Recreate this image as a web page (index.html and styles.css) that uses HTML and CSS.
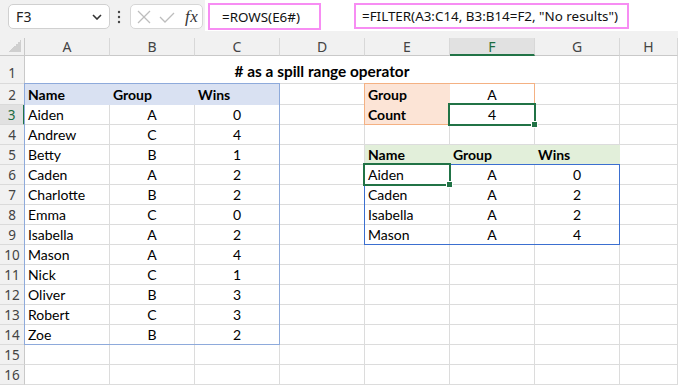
FILE: index.html
```html
<!DOCTYPE html>
<html>
<head>
<meta charset="utf-8">
<link rel="stylesheet" href="styles.css">
</head>
<body>
<div class="app">
  <div class="top">
    <div class="namebox">
      <span class="nb-text">F3</span>
      <svg class="chev" width="10" height="6" viewBox="0 0 10 6"><polyline points="1,1 5,5 9,1" fill="none" stroke="#333" stroke-width="1.6"/></svg>
    </div>
    <div class="dots">
      <svg width="4" height="14" viewBox="0 0 4 14"><circle cx="2" cy="2" r="1.2" fill="#444"/><circle cx="2" cy="7" r="1.2" fill="#444"/><circle cx="2" cy="12" r="1.2" fill="#444"/></svg>
    </div>
    <div class="fxbox">
      <svg class="ico-x" width="14" height="14" viewBox="0 0 14 14"><line x1="1" y1="1" x2="13" y2="13" stroke="#bdbdbd" stroke-width="1.3"/><line x1="13" y1="1" x2="1" y2="13" stroke="#bdbdbd" stroke-width="1.3"/></svg>
      <svg class="ico-ok" width="16" height="11" viewBox="0 0 16 11"><polyline points="1,5 6,10 15,1" fill="none" stroke="#bdbdbd" stroke-width="1.3"/></svg>
      <span class="fx">fx</span>
    </div>
    <div class="fbar">
      <div class="fbox fbox1">=ROWS(E6#)</div>
      <div class="fbox fbox2">=FILTER(A3:C14, B3:B14=F2, "No results")</div>
    </div>
  </div>

  <div class="sheet">
    <div class="cells">
      <div class="ch corner"></div>
      <div class="ch">A</div><div class="ch">B</div><div class="ch">C</div><div class="ch">D</div>
      <div class="ch">E</div><div class="ch ch-sel">F</div><div class="ch">G</div><div class="ch">H</div>

      <div class="rh r1">1</div>
      <div class="c title">#&nbsp;as a spill range operator</div>
      <div class="c"></div>

      <div class="rh">2</div>
      <div class="c b fb">Name</div><div class="c b fb">Group</div><div class="c b fb">Wins</div><div class="c"></div>
      <div class="c b fo">Group</div><div class="c m">A</div><div class="c"></div><div class="c"></div>

      <div class="rh rh-sel">3</div>
      <div class="c">Aiden</div><div class="c m">A</div><div class="c m">0</div><div class="c"></div>
      <div class="c b fo">Count</div><div class="c m">4</div><div class="c"></div><div class="c"></div>

      <div class="rh">4</div>
      <div class="c">Andrew</div><div class="c m">C</div><div class="c m">4</div><div class="c"></div>
      <div class="c"></div><div class="c"></div><div class="c"></div><div class="c"></div>

      <div class="rh">5</div>
      <div class="c">Betty</div><div class="c m">B</div><div class="c m">1</div><div class="c"></div>
      <div class="c b fg">Name</div><div class="c b fg">Group</div><div class="c b fg">Wins</div><div class="c"></div>

      <div class="rh">6</div>
      <div class="c">Caden</div><div class="c m">A</div><div class="c m">2</div><div class="c"></div>
      <div class="c">Aiden</div><div class="c m">A</div><div class="c m">0</div><div class="c"></div>

      <div class="rh">7</div>
      <div class="c">Charlotte</div><div class="c m">B</div><div class="c m">2</div><div class="c"></div>
      <div class="c">Caden</div><div class="c m">A</div><div class="c m">2</div><div class="c"></div>

      <div class="rh">8</div>
      <div class="c">Emma</div><div class="c m">C</div><div class="c m">0</div><div class="c"></div>
      <div class="c">Isabella</div><div class="c m">A</div><div class="c m">2</div><div class="c"></div>

      <div class="rh">9</div>
      <div class="c">Isabella</div><div class="c m">A</div><div class="c m">2</div><div class="c"></div>
      <div class="c">Mason</div><div class="c m">A</div><div class="c m">4</div><div class="c"></div>

      <div class="rh">10</div>
      <div class="c">Mason</div><div class="c m">A</div><div class="c m">4</div><div class="c"></div>
      <div class="c"></div><div class="c"></div><div class="c"></div><div class="c"></div>

      <div class="rh">11</div>
      <div class="c">Nick</div><div class="c m">C</div><div class="c m">1</div><div class="c"></div>
      <div class="c"></div><div class="c"></div><div class="c"></div><div class="c"></div>

      <div class="rh">12</div>
      <div class="c">Oliver</div><div class="c m">B</div><div class="c m">3</div><div class="c"></div>
      <div class="c"></div><div class="c"></div><div class="c"></div><div class="c"></div>

      <div class="rh">13</div>
      <div class="c">Robert</div><div class="c m">C</div><div class="c m">3</div><div class="c"></div>
      <div class="c"></div><div class="c"></div><div class="c"></div><div class="c"></div>

      <div class="rh">14</div>
      <div class="c">Zoe</div><div class="c m">B</div><div class="c m">2</div><div class="c"></div>
      <div class="c"></div><div class="c"></div><div class="c"></div><div class="c"></div>

      <div class="rh">15</div>
      <div class="c"></div><div class="c"></div><div class="c"></div><div class="c"></div>
      <div class="c"></div><div class="c"></div><div class="c"></div><div class="c"></div>

      <div class="rh">16</div>
      <div class="c"></div><div class="c"></div><div class="c"></div><div class="c"></div>
      <div class="c"></div><div class="c"></div><div class="c"></div><div class="c"></div>
    </div>

    <div class="marks">
      <div class="mk mk-blue"></div>
      <div class="mk mk-orange"></div>
      <div class="mk mk-spill"></div>
      <div class="mk sel sel-f3"></div>
      <div class="mk sel sel-e6"></div>
    </div>
  </div>
</div>
</body>
</html>
```

FILE: styles.css
```css
html, body {
  margin: 0;
  padding: 0;
  background: #ffffff;
}
.app {
  width: 678px;
  height: 385px;
  overflow: hidden;
  font-family: "Lato", "Liberation Sans", sans-serif;
  color: #000;
}

/* ---------- formula bar ---------- */
.top {
  display: flex;
  align-items: flex-start;
  height: 38px;
  background: #f1f1f1;
}
.namebox {
  margin: 4px 0 0 8px;
  width: 102px;
  height: 25px;
  box-sizing: border-box;
  border: 1px solid #d0d0d0;
  border-radius: 5px;
  background: #fff;
  display: flex;
  align-items: center;
  justify-content: space-between;
  padding: 0 7px 0 7px;
  font-family: "Noto Sans", "Open Sans", sans-serif;
  font-size: 14px;
  color: #222;
}
.nb-text { letter-spacing: 0.2px; }
.chev { margin-top: 1px; }
.dots {
  width: 20px;
  height: 33px;
  display: flex;
  align-items: center;
  justify-content: center;
  margin-left: -1px;
}
.fxbox {
  margin-top: 4px;
  margin-left: 1px;
  width: 73px;
  height: 25px;
  box-sizing: border-box;
  border: 1px solid #d6d6d6;
  border-radius: 5px;
  background: #fff;
  display: flex;
  align-items: center;
  padding-left: 6px;
}
.ico-ok { margin-left: 8px; margin-top: 2px; }
.fx {
  margin-left: 10px;
  font-family: "Liberation Serif", "DejaVu Serif", serif;
  font-style: italic;
  font-size: 17px;
  color: #333;
  letter-spacing: 0.5px;
}
.fbar {
  flex: 1;
  height: 31px;
  margin-left: 2px;
  background: #fff;
  display: flex;
  align-items: flex-start;
  padding-top: 3px;
  box-sizing: border-box;
}
.fbox {
  box-sizing: border-box;
  border: 2px solid #f78df3;
  display: flex;
  align-items: center;
  font-family: "Noto Sans", "Open Sans", sans-serif;
  font-size: 13.4px;
  color: #111;
  white-space: nowrap;
}
.fbox1 {
  margin-left: 3px;
  width: 113px;
  height: 27px;
  padding-left: 12px;
}
.fbox2 {
  margin-left: 33px;
  width: 275px;
  height: 26px;
  padding-left: 6px;
}

/* ---------- sheet ---------- */
.sheet {
  display: grid;
}
.cells, .marks {
  grid-area: 1 / 1;
  display: grid;
  grid-template-columns: 25px repeat(7, 85px) 1fr;
  grid-template-rows: 18px 28px 21px repeat(14, 20px);
}
.marks { pointer-events: none; }

.ch {
  background: #f1f1f1;
  border-right: 1px solid #d8d8d8;
  border-bottom: 1px solid #c9c9c9;
  display: flex;
  align-items: center;
  justify-content: center;
  font-family: "Noto Sans", "Open Sans", sans-serif;
  font-size: 14px;
  color: #444;
  line-height: 17px;
}
.ch.corner {
  border-right-color: #c9c9c9;
  background: #f1f1f1 linear-gradient(135deg, transparent 50%, #cfcfcf 50%) no-repeat right 3px bottom 3px / 12px 12px;
}
.ch-sel {
  background: #e1e1e1;
  border-bottom: 2px solid #217346;
  color: #1d6b40;
}
.rh {
  background: #f1f1f1;
  border-right: 1px solid #c9c9c9;
  border-bottom: 1px solid #dadada;
  display: flex;
  align-items: flex-end;
  justify-content: center;
  font-family: "Noto Sans", "Open Sans", sans-serif;
  font-size: 13.5px;
  line-height: 18px;
  color: #444;
}
.rh.r1 { padding-bottom: 1px; }
.rh-sel {
  background: #e1e1e1;
  border-right: 2px solid #217346;
  color: #1d6b40;
}
.c {
  border-right: 1px solid #dcdcdc;
  border-bottom: 1px solid #dcdcdc;
  display: flex;
  align-items: flex-end;
  padding: 0 3px;
  font-size: 14px;
  line-height: 18px;
  white-space: nowrap;
  min-width: 0;
  overflow: hidden;
}
.c.m { justify-content: center; }
.c.b { font-weight: 700; }
.c.title {
  grid-column: span 7;
  justify-content: center;
  font-weight: 700;
  font-size: 15.4px;
  padding-bottom: 3px;
}
.fb { background: #d9e1f2; border-color: #d9e1f2; }
.fo { background: #fce4d6; border-color: #fce4d6; }
.fg { background: #e2efda; border-color: #e2efda; }

/* ---------- range marks ---------- */
.mk {
  border: 1px solid transparent;
  margin: -1px 0 0 -1px;
}
.mk-blue   { grid-column: 2 / 5; grid-row: 3 / 16; border-color: #8eaadb; }
.mk-orange { grid-column: 6 / 8; grid-row: 3 / 5;  border-color: #f4b183; }
.mk-spill  { grid-column: 6 / 9; grid-row: 7 / 11; border-color: #3b6fd0; }
.sel {
  position: relative;
  border: 2px solid #217346;
  margin: -2px -1px -1px -2px;
}
.sel::after {
  content: "";
  position: absolute;
  right: -4px;
  bottom: -4px;
  width: 5px;
  height: 5px;
  background: #217346;
  border: 1px solid #fff;
}
.sel-f3 { grid-column: 7 / 8; grid-row: 4 / 5; }
.sel-e6 { grid-column: 6 / 7; grid-row: 7 / 8; }
```
